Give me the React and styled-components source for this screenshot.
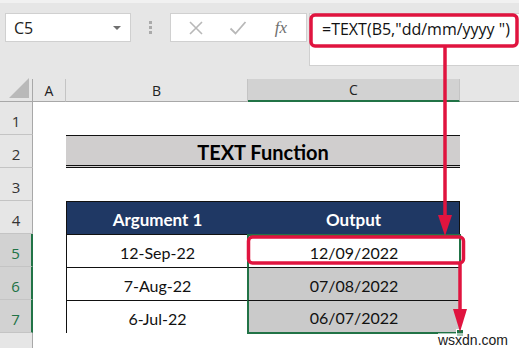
import React from 'react'
import styled, { createGlobalStyle } from 'styled-components'

const GlobalStyle = createGlobalStyle`
  html, body {
    margin: 0;
    padding: 0;
    background: #ffffff;
    overflow: hidden;
  }
  body {
    font-family: Lato, "Open Sans", sans-serif;
  }
`

const RED = '#e0143f'
const GREEN = '#217346'

const rows = [
  { n: 1 },
  { n: 2, title: true },
  { n: 3 },
  { n: 4, head: true },
  { n: 5, arg: '12-Sep-22', out: '12/09/2022' },
  { n: 6, arg: '7-Aug-22', out: '07/08/2022' },
  { n: 7, arg: '6-Jul-22', out: '06/07/2022' },
]

const App = () => {
  return (
    <Page>
      <GlobalStyle />
      <Toolbar>
        <NameBox>
          <span>C5</span>
          <Caret />
        </NameBox>
        <Grip>
          <i />
          <i />
          <i />
        </Grip>
        <Buttons>
          <IconSlot>
            <svg width="16" height="16" viewBox="0 0 16 16">
              <path d="M2 2 L14 14 M14 2 L2 14" stroke="#b8b8b8" strokeWidth="1.6" fill="none" />
            </svg>
          </IconSlot>
          <IconSlot>
            <svg width="18" height="16" viewBox="0 0 18 16">
              <path d="M1.5 8.5 L6.5 13.5 L16.5 2" stroke="#b8b8b8" strokeWidth="1.8" fill="none" />
            </svg>
          </IconSlot>
          <IconSlot>
            <Fx>fx</Fx>
          </IconSlot>
        </Buttons>
        <FormulaBox>=TEXT(B5,"dd/mm/yyyy ")</FormulaBox>
      </Toolbar>

      <Sheet>
        <Corner>
          <svg width="20" height="20" viewBox="0 0 20 20">
            <path d="M20 0 L20 20 L0 20 Z" fill="#b9b9b9" />
          </svg>
        </Corner>
        <ColHead>A</ColHead>
        <ColHead>B</ColHead>
        <ColHead $active>C</ColHead>
        <ColHead $last />

        {rows.map((r) => {
          const sel = r.n >= 5
          return (
            <React.Fragment key={r.n}>
              <RowHead $active={sel}>{r.n}</RowHead>
              <Cell />
              {r.title && <TitleCell>TEXT Function</TitleCell>}
              {r.head && (
                <>
                  <HeadCell $first>Argument 1</HeadCell>
                  <HeadCell>Output</HeadCell>
                </>
              )}
              {r.arg && (
                <>
                  <DataCell $first>{r.arg}</DataCell>
                  <OutCell $shaded={r.n > 5} $top={r.n === 5} $bottom={r.n === 7}>
                    {r.out}
                    {r.n === 7 && <Handle />}
                  </OutCell>
                </>
              )}
              {!r.title && !r.head && !r.arg && (
                <>
                  <Cell />
                  <Cell />
                </>
              )}
              <Cell />
            </React.Fragment>
          )
        })}
        <RowHead $filler />
        <Cell />
        <Cell />
        <Cell />
        <Cell />
      </Sheet>

      <Annotations width="519" height="348" viewBox="0 0 519 348">
        <rect x="311" y="15" width="206" height="31" rx="4" fill="none" stroke={RED} strokeWidth="3.5" />
        <line x1="445" y1="47" x2="445" y2="220" stroke={RED} strokeWidth="3.5" />
        <path d="M438 215 L452 215 L445 236 Z" fill={RED} />
        <rect x="248.5" y="237" width="215" height="26" rx="4" fill="none" stroke={RED} strokeWidth="3.5" />
        <line x1="460" y1="263" x2="460" y2="314" stroke={RED} strokeWidth="3.5" />
        <path d="M453 309 L467 309 L460 332 Z" fill={RED} />
      </Annotations>

      <Watermark>wsxdn.com</Watermark>
    </Page>
  )
}

export default App

const Page = styled.div`
  position: relative;
  width: 519px;
  height: 348px;
  overflow: hidden;
  background: #ffffff;
`

const Toolbar = styled.div`
  height: 79px;
  box-sizing: border-box;
  background: #e6e6e6;
  border-top: 3px solid #f1f1f1;
  display: flex;
  align-items: flex-start;
  padding: 10px 0 0 5px;
`

const NameBox = styled.div`
  width: 126px;
  height: 29px;
  box-sizing: border-box;
  background: #ffffff;
  border: 1px solid #d0d0d0;
  display: flex;
  align-items: center;
  justify-content: space-between;
  padding: 0 9px 0 8px;
  font-family: "Open Sans", sans-serif;
  font-size: 16px;
  color: #222;
`

const Caret = styled.span`
  width: 0;
  height: 0;
  border-left: 4px solid transparent;
  border-right: 4px solid transparent;
  border-top: 4px solid #6f6f6f;
`

const Grip = styled.div`
  width: 39px;
  height: 29px;
  display: flex;
  flex-direction: column;
  align-items: center;
  justify-content: center;
  gap: 2px;

  i {
    display: block;
    width: 3px;
    height: 3px;
    background: #aaaaaa;
  }
`

const Buttons = styled.div`
  width: 137px;
  height: 29px;
  box-sizing: border-box;
  background: #ffffff;
  border: 1px solid #d0d0d0;
  display: flex;
  align-items: center;
  justify-content: space-around;
  padding: 0 4px;
`

const IconSlot = styled.div`
  width: 40px;
  display: flex;
  align-items: center;
  justify-content: center;
`

const Fx = styled.span`
  font-family: "Liberation Serif", serif;
  font-style: italic;
  font-size: 17px;
  color: #6e6e6e;
`

const FormulaBox = styled.div`
  flex: 1;
  height: 53px;
  margin-left: 2px;
  box-sizing: border-box;
  background: #ffffff;
  border: 1px solid #d0d0d0;
  border-right: none;
  padding: 4px 0 0 12px;
  font-family: "Open Sans", sans-serif;
  font-size: 16px;
  color: #111;
  white-space: nowrap;
`

const Sheet = styled.div`
  display: grid;
  grid-template-columns: 33px 33px 182px 212px 1fr;
  grid-template-rows: 23px repeat(7, 33px) 1fr;
  height: 269px;
`

const Corner = styled.div`
  background: #e6e6e6;
  border-right: 1px solid #a8a8a8;
  border-bottom: 1px solid #a8a8a8;
  display: flex;
  align-items: flex-end;
  justify-content: flex-end;
  padding: 0 3px 3px 0;
`

const ColHead = styled.div`
  background: ${(p) => (p.$active ? '#d2d2d2' : '#e6e6e6')};
  border-right: ${(p) => (p.$last ? 'none' : '1px solid #c4c4c4')};
  border-bottom: ${(p) => (p.$active ? `2px solid ${GREEN}` : '1px solid #a8a8a8')};
  display: flex;
  align-items: center;
  justify-content: center;
  font-family: "Open Sans", sans-serif;
  font-size: 14px;
  color: #222;
`

const RowHead = styled.div`
  background: ${(p) => (p.$active ? '#d2d2d2' : '#e6e6e6')};
  border-right: ${(p) => (p.$active ? `2px solid ${GREEN}` : '1px solid #a8a8a8')};
  border-bottom: ${(p) => (p.$filler ? 'none' : '1px solid #c4c4c4')};
  display: flex;
  align-items: center;
  justify-content: center;
  font-family: "Open Sans", sans-serif;
  font-size: 15px;
  color: ${(p) => (p.$active ? GREEN : '#333')};
  padding-top: 6px;
`

const Cell = styled.div`
  background: #ffffff;
`

const TitleCell = styled.div`
  grid-column: 3 / 5;
  background: #d0cece;
  border-top: 1px solid #111;
  border-bottom: 3px double #111;
  display: flex;
  align-items: center;
  justify-content: center;
  font-family: Lato, sans-serif;
  font-weight: 700;
  font-size: 20px;
  color: #000;
  padding-top: 2px;
`

const HeadCell = styled.div`
  background: #1f3864;
  border-top: 1px solid #111;
  border-left: ${(p) => (p.$first ? '1px solid #111' : 'none')};
  border-right: ${(p) => (p.$first ? 'none' : '1px solid #111')};
  display: flex;
  align-items: center;
  justify-content: center;
  font-family: Lato, sans-serif;
  font-weight: 700;
  font-size: 17px;
  color: #ffffff;
  padding-top: 2px;
`

const DataCell = styled.div`
  background: #ffffff;
  border-top: 1px solid #111;
  border-bottom: 1px solid #111;
  margin-bottom: -1px;
  border-left: 1px solid #111;
  display: flex;
  align-items: center;
  justify-content: center;
  font-family: Lato, sans-serif;
  font-size: 16px;
  color: #111;
  padding-top: 2px;
`

const OutCell = styled(DataCell)`
  position: relative;
  z-index: 1;
  background: ${(p) => (p.$shaded ? '#cacaca' : '#ffffff')};
  border-left: 2px solid ${GREEN};
  border-right: 2px solid ${GREEN};
  margin-left: -1px;
  margin-right: -1px;
  border-top: ${(p) => (p.$top ? `2px solid ${GREEN}` : '1px solid #111')};
  border-bottom: ${(p) => (p.$bottom ? `2px solid ${GREEN}` : '1px solid #111')};
`

const Handle = styled.span`
  position: absolute;
  right: -5px;
  bottom: -5px;
  width: 6px;
  height: 6px;
  background: ${GREEN};
  border: 1px solid #fff;
`

const Annotations = styled.svg`
  position: absolute;
  left: 0;
  top: 0;
  z-index: 2;
  pointer-events: none;
`

const Watermark = styled.div`
  position: absolute;
  right: 11px;
  bottom: 0;
  z-index: 3;
  line-height: 15px;
  font-family: "Liberation Sans", Arial, sans-serif;
  font-size: 14px;
  color: #1a1a1a;
  background: rgba(255, 255, 255, 0.6);
`
